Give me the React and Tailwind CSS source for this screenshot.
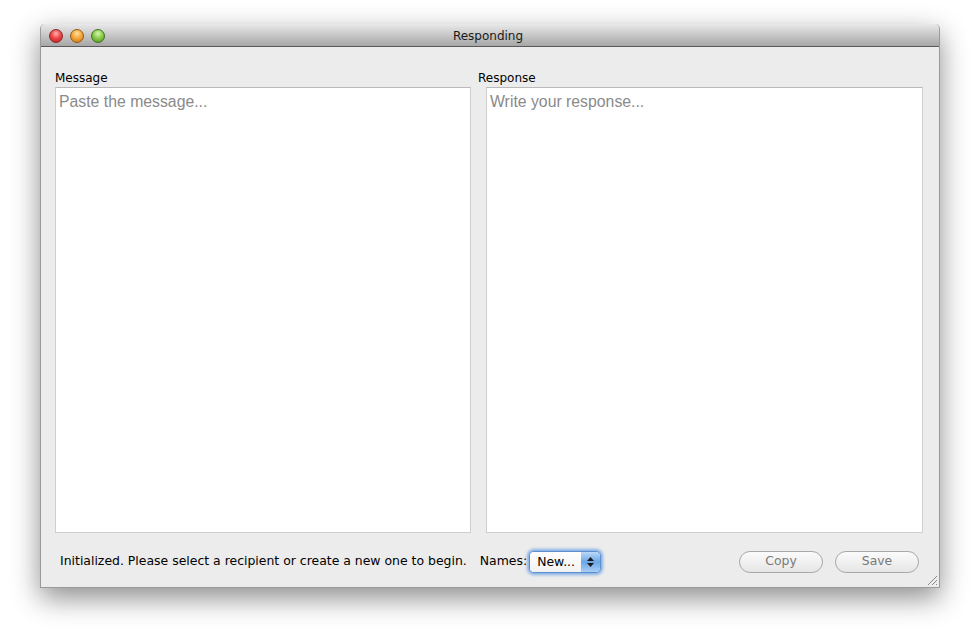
import React from "react";

export default function App() {
  const ui = { fontFamily: '"DejaVu Sans", "Liberation Sans", sans-serif' };
  const ph = { fontFamily: '"Liberation Sans", Arial, sans-serif' };
  return (
    <div className="w-[980px] h-[643px] bg-white relative overflow-hidden" style={ui}>
      <div className="absolute left-[40px] top-[24px] w-[900px] h-[564px] flex flex-col bg-[#ececec] rounded-t-[5px] shadow-[0_10px_28px_rgba(0,0,0,0.45)] border-x border-b border-[#9a9a9a]">
        {/* title bar */}
        <div className="h-[23px] flex items-center relative rounded-t-[5px] bg-gradient-to-b from-[#e9e9e9] to-[#a7a7a7] border-b border-[#5a5a5a] shrink-0">
          <div className="flex items-center gap-[7px] pl-[8px] pt-[1px]">
            <div className="w-[14px] h-[14px] rounded-full bg-[radial-gradient(circle_at_50%_30%,#ffb3b3_0%,#f04848_45%,#b8141a_100%)] border border-[#8a2a2a]" />
            <div className="w-[14px] h-[14px] rounded-full bg-[radial-gradient(circle_at_50%_30%,#ffe0a0_0%,#f5a93a_45%,#c87010_100%)] border border-[#8f5a1a]" />
            <div className="w-[14px] h-[14px] rounded-full bg-[radial-gradient(circle_at_50%_30%,#d8f5b0_0%,#8ccc4c_45%,#4a9020_100%)] border border-[#3f6f22]" />
          </div>
          <div className="absolute inset-0 flex items-center justify-center text-[12px] text-[#1a1a1a] pt-[2px] pr-[4px]">Responding</div>
        </div>
        {/* body */}
        <div className="flex-1 flex flex-col pl-[14px] pr-[15px] pt-[22px]">
          <div className="flex gap-[15px] flex-1">
            <div className="flex flex-col w-[416px]">
              <div className="text-[12px] text-black h-[18px] leading-[18px]">Message</div>
              <div className="h-[446px] bg-white border border-[#cfcfcf] border-t-[#b9b9b9] px-[3px] pt-[2px]">
                <div className="text-[15.8px] text-[#8a8a8a]" style={ph}>Paste the message...</div>
              </div>
            </div>
            <div className="flex flex-col w-[437px]">
              <div className="text-[12px] text-black h-[18px] leading-[18px] -ml-[8px]">Response</div>
              <div className="h-[446px] bg-white border border-[#cfcfcf] border-t-[#b9b9b9] px-[3px] pt-[2px]">
                <div className="text-[15.8px] text-[#8a8a8a]" style={ph}>Write your response...</div>
              </div>
            </div>
          </div>
          {/* bottom bar */}
          <div className="h-[54px] flex items-center pt-[3px]">
            <div className="text-[12.45px] text-black ml-[5px]">Initialized. Please select a recipient or create a new one to begin.</div>
            <div className="text-[12.45px] text-black ml-[13px]">Names:</div>
            <div className="ml-[2px] w-[72px] h-[22px] rounded-[5px] border border-[#5c8fd0] shadow-[0_0_3px_2px_rgba(90,150,225,0.7)] flex overflow-hidden bg-white">
              <div className="flex-1 text-[12.45px] text-black pl-[7px] leading-[20px] bg-gradient-to-b from-white to-[#f2f2f2]">New...</div>
              <div className="w-[19px] bg-gradient-to-b from-[#bcd8f6] via-[#6aa6e6] to-[#a8cef4] flex flex-col items-center justify-center gap-[2px]">
                <svg width="7" height="4" viewBox="0 0 7 4"><path d="M0 4 L3.5 0 L7 4 Z" fill="#1a1a1a" /></svg>
                <svg width="7" height="4" viewBox="0 0 7 4"><path d="M0 0 L3.5 4 L7 0 Z" fill="#1a1a1a" /></svg>
              </div>
            </div>
            <div className="flex-1" />
            <div className="w-[84px] h-[22px] rounded-full border border-[#a8a8a8] bg-gradient-to-b from-[#fbfbfb] to-[#e6e6e6] flex items-center justify-center text-[12.45px] text-[#7a7a7a]">Copy</div>
            <div className="w-[84px] h-[22px] rounded-full border border-[#a8a8a8] bg-gradient-to-b from-[#fbfbfb] to-[#e6e6e6] flex items-center justify-center text-[12.45px] text-[#7a7a7a] ml-[12px] mr-[5px]">Save</div>
          </div>
        </div>
        <svg className="absolute right-[1px] bottom-[1px]" width="12" height="12" viewBox="0 0 12 12">
          <path d="M11 2 L2 11 M11 6 L6 11 M11 10 L10 11" stroke="#8a8a8a" strokeWidth="1" />
        </svg>
      </div>
    </div>
  );
}
